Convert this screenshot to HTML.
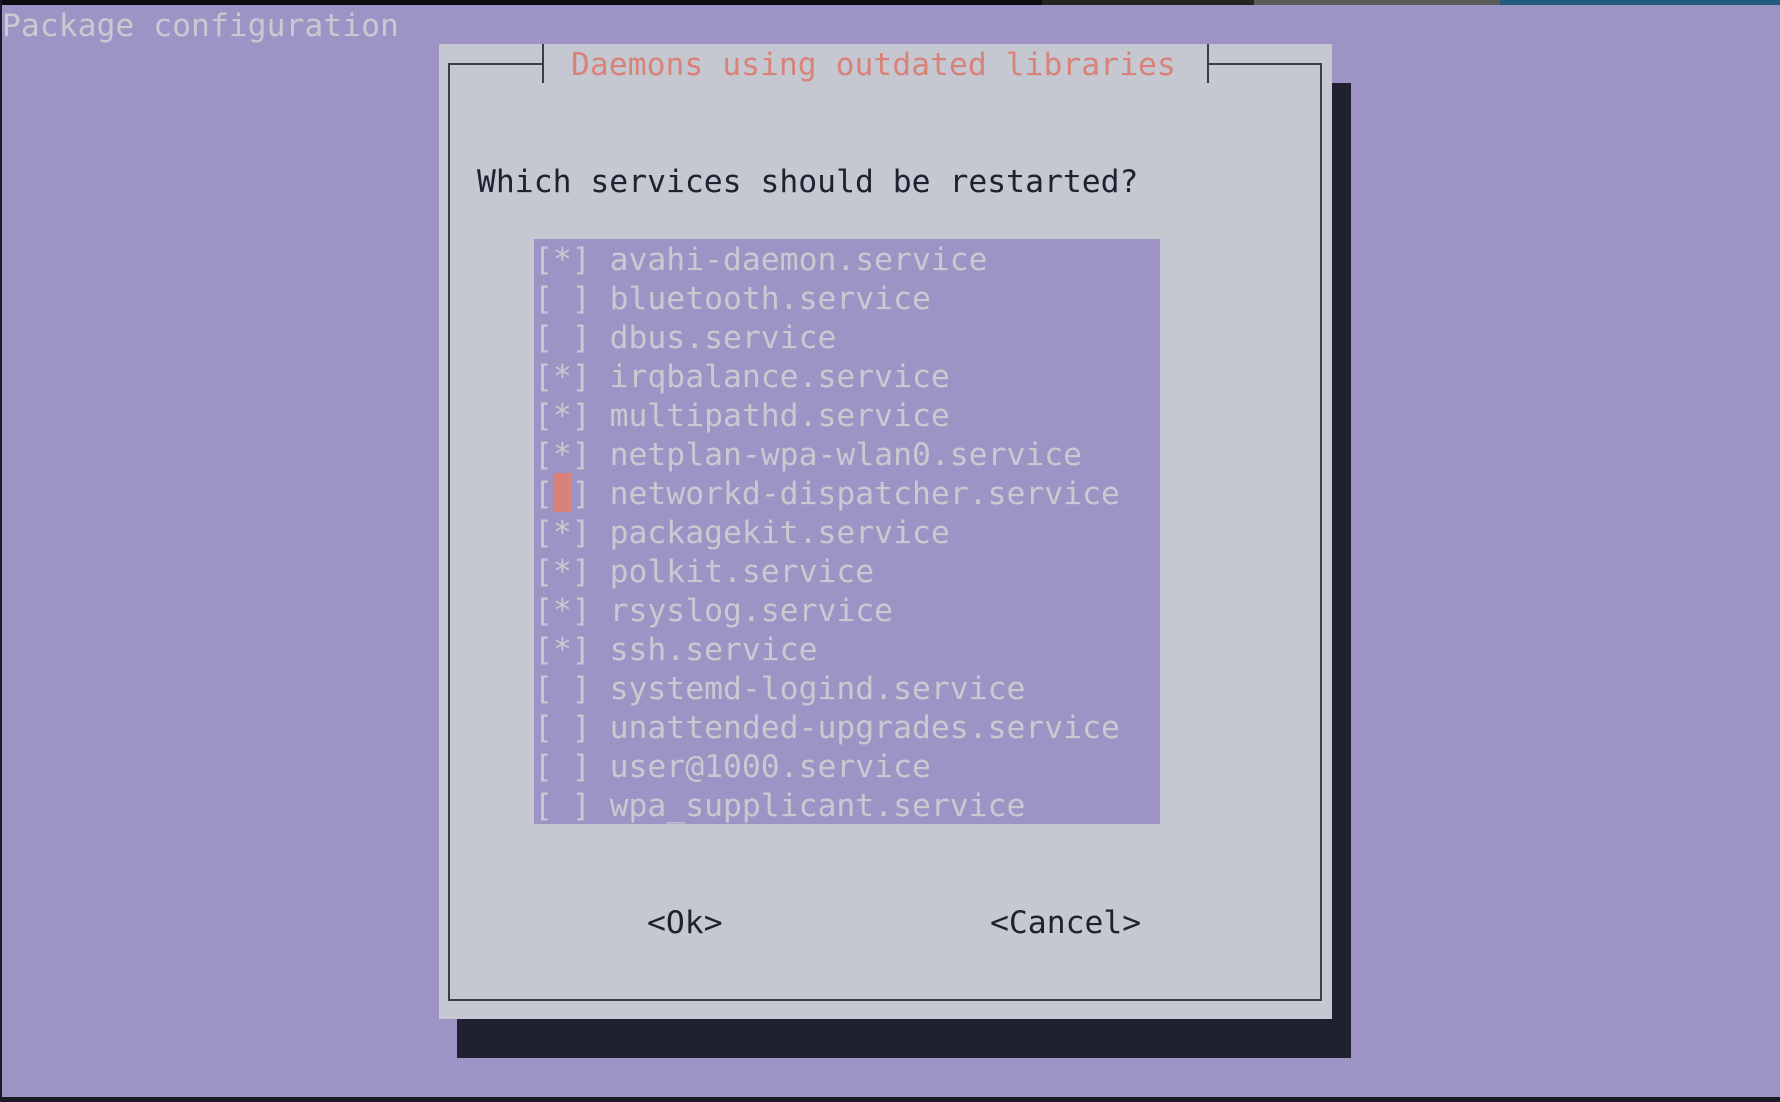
<!DOCTYPE html>
<html><head><meta charset="utf-8"><style>
html,body{margin:0;padding:0;width:1780px;height:1102px;overflow:hidden;background:#9d94c5;}
body{position:relative;font-family:"DejaVu Sans Mono","Liberation Mono",monospace;font-size:31.4px;}
.t{position:absolute;white-space:pre;line-height:39px;height:39px;padding-top:2px;}
.abs{position:absolute;}
</style></head><body>
<div class="abs" style="left:0;top:0;width:1042px;height:5px;background:#0e0e10"></div>
<div class="abs" style="left:1042px;top:0;width:212px;height:5px;background:#242424"></div>
<div class="abs" style="left:1254px;top:0;width:246px;height:5px;background:#5b5b5b"></div>
<div class="abs" style="left:1500px;top:0;width:280px;height:5px;background:#235a80"></div>
<div class="abs" style="left:0;top:0;width:2px;height:1102px;background:#1a1a28"></div>
<div class="abs" style="left:0;top:1097px;width:1780px;height:5px;background:#1a1a22"></div>

<div class="t" style="left:2px;top:5px;color:#c9c9d2">Package configuration</div>

<div class="abs" style="left:457px;top:83px;width:894px;height:975px;background:#1f2030"></div>
<div class="abs" style="left:439px;top:44px;width:893px;height:975px;background:#c5c8d0"></div>
<div class="abs" style="left:448px;top:63px;width:870px;height:934px;border:2px solid #3a3d4a"></div>
<div class="abs" style="left:542px;top:44px;width:663px;height:39px;background:#c5c8d0;border-left:2px solid #3a3d4a;border-right:2px solid #3a3d4a"></div>
<div class="t" style="left:571px;top:44px;color:#d9827a">Daemons using outdated libraries</div>

<div class="t" style="left:477px;top:161px;color:#1f2030">Which services should be restarted?</div>

<div class="abs" style="left:534px;top:239px;width:626px;height:585px;background:#9d94c5"></div>
<div class="abs" style="left:553px;top:473px;width:19px;height:39px;background:#d9827a"></div>
<div class="t" style="left:534px;top:239px;color:#c9c9d2;height:auto">[*] avahi-daemon.service
[ ] bluetooth.service
[ ] dbus.service
[*] irqbalance.service
[*] multipathd.service
[*] netplan-wpa-wlan0.service
[ ] networkd-dispatcher.service
[*] packagekit.service
[*] polkit.service
[*] rsyslog.service
[*] ssh.service
[ ] systemd-logind.service
[ ] unattended-upgrades.service
[ ] user@1000.service
[ ] wpa_supplicant.service</div>

<div class="t" style="left:647px;top:902px;color:#1f2030">&lt;Ok&gt;</div>
<div class="t" style="left:990px;top:902px;color:#1f2030">&lt;Cancel&gt;</div>
</body></html>
